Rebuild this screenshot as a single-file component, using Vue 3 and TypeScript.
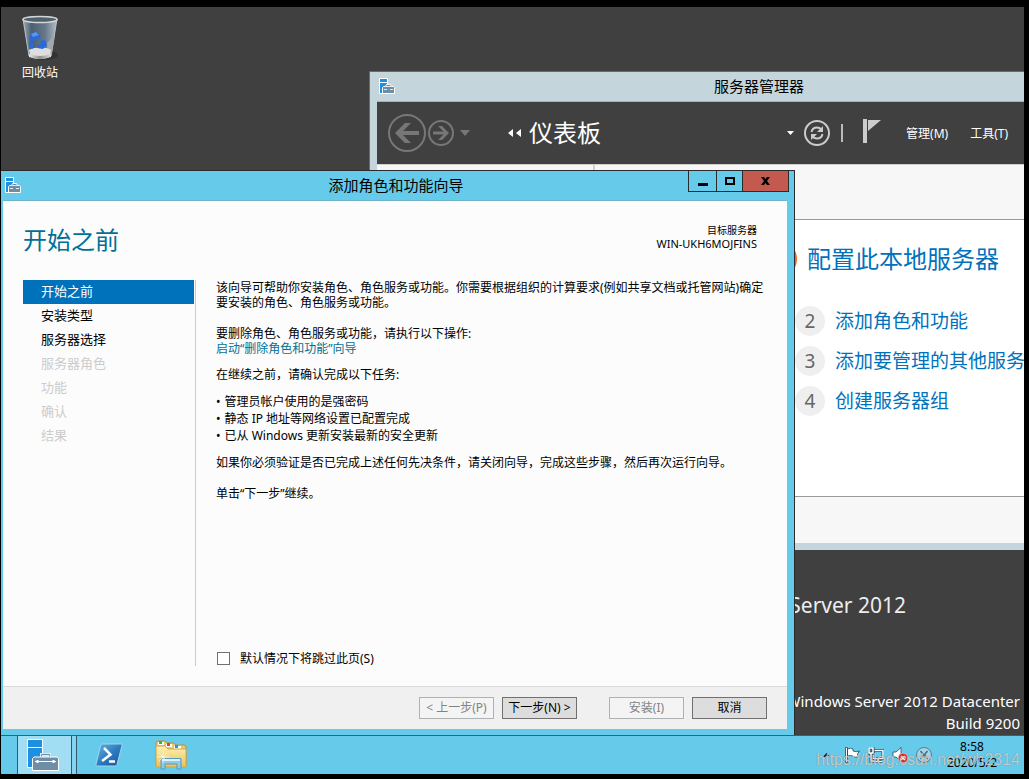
<script setup lang="ts">
import { ref } from 'vue'

interface NavStep {
  label: string
  state: 'active' | 'ready' | 'disabled'
}

const navSteps: NavStep[] = [
  { label: '开始之前', state: 'active' },
  { label: '安装类型', state: 'ready' },
  { label: '服务器选择', state: 'ready' },
  { label: '服务器角色', state: 'disabled' },
  { label: '功能', state: 'disabled' },
  { label: '确认', state: 'disabled' },
  { label: '结果', state: 'disabled' },
]

const tasks: string[] = [
  '管理员帐户使用的是强密码',
  '静态 IP 地址等网络设置已配置完成',
  '已从 Windows 更新安装最新的安全更新',
]

const quickStart = [
  { n: 2, label: '添加角色和功能' },
  { n: 3, label: '添加要管理的其他服务器' },
  { n: 4, label: '创建服务器组' },
]

const menus: string[] = ['管理(M)', '工具(T)']
const skipPage = ref(false)
</script>

<template>
  <div class="screen">
    <svg class="defs" aria-hidden="true">
      <symbol id="server-small" viewBox="0 0 16 16">
        <path d="M.5.5h8v15h-8z" fill="#1f8fe0" stroke="#fff" />
        <path d="M1 4.500h7" stroke="#fff" />
        <path d="M3.500 15.500v-6l1-1h2l1-2h4l1 2h2l1 1v6z" fill="#6f8ea6" stroke="#fff" />
        <path d="M7 8.500h5" stroke="#fff" opacity=".8" />
        <path d="M5 11.500h3M11 11.500h3" stroke="#fff" opacity=".8" />
      </symbol>
      <symbol id="server-large" viewBox="0 0 32 32">
        <path d="M.5.5h15v28h-15z" fill="#1f8fe0" stroke="#fff" />
        <path d="M1 8.500h14" stroke="#fff" />
        <path d="M14.500 18v-2.500h8V18" fill="none" stroke="#dfe9ef" stroke-width="3" />
        <path d="M14.500 18v-2.500h8V18" fill="none" stroke="#6f8ea6" />
        <path d="M5.500 19.500l1.500-1.500h23l1.500 1.500v12h-26z" fill="#6f8ea6" stroke="#fff" />
        <path d="M8 22.500h21" stroke="#fff" />
        <path d="M10.500 21v3M26.500 21v3" stroke="#fff" stroke-width="2" />
      </symbol>
    </svg>

    <main class="workspace">
      <a class="recycle" href="#">
        <svg width="38" height="46" viewBox="0 0 38 46" aria-hidden="true">
          <defs>
            <linearGradient id="bin" x1="0" x2="1">
              <stop offset="0" stop-color="#9eabb5" />
              <stop offset=".25" stop-color="#4c6070" />
              <stop offset=".65" stop-color="#66788a" />
              <stop offset="1" stop-color="#b4bcc2" />
            </linearGradient>
            <linearGradient id="base" x1="0" x2="1">
              <stop offset="0" stop-color="#e8e8e8" />
              <stop offset=".5" stop-color="#8f8f8f" />
              <stop offset="1" stop-color="#d8d8d8" />
            </linearGradient>
          </defs>
          <ellipse cx="23" cy="40" rx="14" ry="5" fill="#2c2c2c" opacity=".6" />
          <path d="M2 4l6 37q11 5 22 0l6-37z" fill="url(#bin)" stroke="#b9c3ca" />
          <path d="M26 28l8-8-3 18-4 3z" fill="#a2a8ad" />
          <path d="M8 35q5-3 11-2 7-1 11 2l-1 5q-10 4-20 0z" fill="#dedede" />
          <path d="M8 39q11 4 22 0v3q-11 4-22 0z" fill="url(#base)" />
          <path d="M9 20l5-3 4 2 2 5-4-1-3 3-5-1zM19 26l5-1 2 5-4 4-6-1 1-3 3-1zM8 26l5 2-1 6-4-2z" fill="#2869e0" />
          <path d="M10 19l5-2 3 3-6 2z" fill="#5b94f4" />
          <ellipse cx="19" cy="4.500" rx="17" ry="3" fill="#4d6170" stroke="#d6d6d6" stroke-width="1.500" />
        </svg>
        <span>回收站</span>
      </a>

      <div class="wordmark">Windows Server 2012</div>
      <div class="build">
        <div>Windows Server 2012 Datacenter</div>
        <div>Build 9200</div>
      </div>

      <section class="manager" aria-label="服务器管理器">
        <header class="manager-title">
          <svg width="16" height="16" aria-hidden="true"><use href="#server-small" /></svg>
          <h2>服务器管理器</h2>
        </header>
        <div class="manager-bar">
          <button class="flat back" aria-label="后退">
            <svg width="38" height="38" viewBox="0 0 38 38" fill="none" stroke="#777">
              <circle cx="19" cy="19" r="18" stroke-width="2" />
              <path d="M31 19H10" stroke-width="4" />
              <path d="M7 19l10-10h6L13 19l10 10h-6z" fill="#777" stroke="none" />
            </svg>
          </button>
          <button class="flat forward" aria-label="前进">
            <svg width="26" height="26" viewBox="0 0 26 26" fill="none" stroke="#777">
              <circle cx="13" cy="13" r="12" stroke-width="2" />
              <path d="M5 13h14" stroke-width="3" />
              <path d="M21 13l-7-7h-4l7 7-7 7h4z" fill="#777" stroke="none" />
            </svg>
          </button>
          <button class="flat history" aria-label="历史记录">
            <svg width="10" height="6" viewBox="0 0 10 6"><path d="M0 0h10L5 6z" fill="#777" /></svg>
          </button>
          <svg class="crumb" width="13" height="8" viewBox="0 0 13 8" aria-hidden="true">
            <path d="M5 0v8L0 4zM13 0v8L8 4z" fill="#fff" />
          </svg>
          <h1>仪表板</h1>
          <button class="flat drop" aria-label="展开">
            <svg width="7" height="4" viewBox="0 0 7 4"><path d="M0 0h7L3.500 4z" fill="#fff" /></svg>
          </button>
          <button class="flat refresh" aria-label="刷新">
            <svg width="26" height="26" viewBox="0 0 26 26" fill="none" stroke="#ccc">
              <circle cx="13" cy="13" r="12" stroke-width="2" />
              <path d="M7.500 12q1-4.500 5.500-4.500 2.500 0 4.500 2" stroke-width="2" />
              <path d="M18.500 14q-1 4.500-5.500 4.500-2.500 0-4.500-2" stroke-width="2" />
              <path d="M19 6v6h-6zM7 20v-6h6z" fill="#ccc" stroke="none" />
            </svg>
          </button>
          <span class="divider"></span>
          <button class="flat flag" aria-label="通知">
            <svg width="18" height="24" viewBox="0 0 18 24" fill="#ccc">
              <path d="M0 0h4v24H0zM5 1h13L5 12z" />
            </svg>
          </button>
          <nav class="menus">
            <button v-for="m in menus" :key="m" class="flat">{{ m }}</button>
          </nav>
        </div>
        <div class="manager-body">
          <div class="side"></div>
          <div class="dashboard">
            <div class="welcome">
              <a class="primary" href="#"><span class="one">1</span>配置此本地服务器</a>
              <ol>
                <li v-for="q in quickStart" :key="q.n">
                  <span class="num">{{ q.n }}</span><a href="#">{{ q.label }}</a>
                </li>
              </ol>
            </div>
          </div>
        </div>
      </section>

      <section class="wizard" aria-label="添加角色和功能向导">
        <header class="wizard-title">
          <svg width="16" height="16" aria-hidden="true"><use href="#server-small" /></svg>
          <h2>添加角色和功能向导</h2>
          <div class="controls">
            <button class="minimize" aria-label="最小化">
              <svg width="10" height="10" viewBox="0 0 10 10"><path d="M0 7h10v3H0z" /></svg>
            </button>
            <button aria-label="最大化">
              <svg width="10" height="8" viewBox="0 0 10 8"><path d="M0 0h10v8H0zM2 2v4h6V2z" fill-rule="evenodd" /></svg>
            </button>
            <button class="close" aria-label="关闭">
              <svg width="9" height="8" viewBox="0 0 9 8"><path d="M0 0h3l1.500 2L6 0h3L6 4l3 4H6L4.500 6 3 8H0l3-4z" /></svg>
            </button>
          </div>
        </header>

        <div class="wizard-body">
          <div class="wizard-head">
            <h1>开始之前</h1>
            <div class="target">
              <div class="target-label">目标服务器</div>
              <div>WIN-UKH6MOJFINS</div>
            </div>
          </div>
          <div class="columns">
            <nav class="steps">
              <button
                v-for="s in navSteps"
                :key="s.label"
                :class="['step', s.state]"
                :disabled="s.state === 'disabled'"
              >{{ s.label }}</button>
            </nav>
            <div class="content">
              <p>该向导可帮助你安装角色、角色服务或功能。你需要根据组织的计算要求(例如共享文档或托管网站)确定要安装的角色、角色服务或功能。</p>
              <p class="far">要删除角色、角色服务或功能，请执行以下操作:<br /><a href="#">启动“删除角色和功能”向导</a></p>
              <p>在继续之前，请确认完成以下任务:</p>
              <ul>
                <li v-for="t in tasks" :key="t">{{ t }}</li>
              </ul>
              <p>如果你必须验证是否已完成上述任何先决条件，请关闭向导，完成这些步骤，然后再次运行向导。</p>
              <p class="far">单击“下一步”继续。</p>
              <label class="skip" for="skip-page">
                <input id="skip-page" v-model="skipPage" type="checkbox" />
                默认情况下将跳过此页(S)
              </label>
            </div>
          </div>
        </div>

        <footer class="wizard-foot">
          <button disabled>&lt; 上一步(P)</button>
          <button>下一步(N) &gt;</button>
          <button class="install" disabled>安装(I)</button>
          <button>取消</button>
        </footer>
      </section>
    </main>

    <footer class="taskbar">
      <button class="task running" aria-label="服务器管理器">
        <svg width="32" height="32" aria-hidden="true"><use href="#server-large" /></svg>
      </button>
      <span class="stack"></span>
      <button class="task shell" aria-label="PowerShell">
        <svg width="28" height="24" viewBox="0 0 28 24">
          <defs>
            <linearGradient id="ps" x1="0" y1="0" x2="1" y2="1">
              <stop offset="0" stop-color="#6fb4e0" />
              <stop offset=".5" stop-color="#2c7cc0" />
              <stop offset="1" stop-color="#1c4f98" />
            </linearGradient>
          </defs>
          <path d="M7 1h19q1.500 0 1 1.500l-5 19q-.5 1.500-2 1.500H2q-1.500 0-1-1.500l4.500-19Q6 1 7 1z" fill="url(#ps)" stroke="#9fd4f2" />
          <path d="M9 5l6.500 6.500L7 18" fill="none" stroke="#fff" stroke-width="2.500" />
          <path d="M14 18.500h6" stroke="#fff" stroke-width="2.500" />
        </svg>
      </button>
      <button class="task explorer" aria-label="文件资源管理器">
        <svg width="32" height="30" viewBox="0 0 32 30">
          <defs>
            <linearGradient id="folder" x1="0" y1="0" x2="0" y2="1">
              <stop offset="0" stop-color="#fff1b0" />
              <stop offset="1" stop-color="#e8c25c" />
            </linearGradient>
          </defs>
          <path d="M1 3q0-2 2-2h7l2 2h7l2 2h8q2 0 2 2v19H1z" fill="#e9c968" stroke="#b8923a" />
          <path d="M3 2h6v3H3zM11 4h6v3h-6zM19 6h7v3h-7z" fill="#fff" />
          <path d="M4 1h3v3H4z" fill="#1ec13a" />
          <path d="M12 3h3v3h-3z" fill="#d6472b" />
          <path d="M20 5h3v3h-3z" fill="#2c8fe8" />
          <path d="M1 6h9l3 3h18v18H1z" fill="url(#folder)" stroke="#d0a94e" />
          <path d="M6 29V18.500h20V29h-4v-5H10v5z" fill="#8ccbec" stroke="#4f98c4" opacity=".95" />
          <path d="M7 20h18" stroke="#d8f2ff" stroke-width="2" />
          <path d="M8 11v12M2 17h12M4 13l8 8M12 13l-8 8" stroke="#fff" stroke-width=".8" opacity=".8" />
        </svg>
      </button>
      <div class="tray">
        <button class="flat" aria-label="显示隐藏的图标">
          <svg width="7" height="4" viewBox="0 0 7 4"><path d="M3.500 0L7 4H0z" fill="#111" /></svg>
        </button>
        <button class="flat" aria-label="操作中心">
          <svg width="16" height="16" viewBox="0 0 16 16">
            <path d="M1.500.5h2v15h-2zM3.500 2q3-1.500 5.500 0v2q3 1.500 6.500 0l-2 3 1 3q-3 1-6-1-2-1-5 0z" fill="#fff" stroke="#234a5c" stroke-width=".8" />
          </svg>
        </button>
        <button class="flat" aria-label="网络">
          <svg width="16" height="16" viewBox="0 0 16 16" fill="none">
            <path d="M5 3.500h10v8H5zM10 11v3M6 14.500h8" stroke="#234a5c" stroke-width="3" />
            <path d="M5 3.500h10v8H5zM10 11v3M6 14.500h8" stroke="#fff" stroke-width="1.500" />
            <path d="M1 1h4v5H1zM3 6v8h3" stroke="#234a5c" stroke-width="3" />
            <path d="M1 1h4v5H1zM3 6v8h3" stroke="#fff" stroke-width="1.500" />
          </svg>
        </button>
        <button class="flat" aria-label="音量">
          <svg width="16" height="16" viewBox="0 0 16 16">
            <path d="M1 5h3l5-4.500v14L4 10H1z" fill="#fff" stroke="#234a5c" stroke-width=".8" />
            <circle cx="11" cy="11" r="4.800" fill="#df2a22" stroke="#f7d4d2" stroke-width=".6" />
            <path d="M9 9l4 4M13 9l-4 4" stroke="#fff" stroke-width="1.500" />
          </svg>
        </button>
        <button class="flat" aria-label="输入法">
          <svg width="16" height="16" viewBox="0 0 16 16" fill="none">
            <circle cx="8" cy="8" r="7.500" fill="#a9d3e6" stroke="#4b8098" />
            <path d="M4.500 4l2.500 3v2l-2.500 3M11.500 4L9 7v2l2.500 3M6.500 8h3" stroke="#3c6f86" stroke-width="1.500" />
          </svg>
        </button>
        <time class="clock" datetime="2020-05-02T08:58">
          <span>8:58</span>
          <span>2020/5/2</span>
        </time>
      </div>
    </footer>
    <div class="watermark">https://blog.csdn.net/wh2314</div>
  </div>
</template>

<style>
html,
body {
  margin: 0;
  background: #000;
}
</style>

<style scoped>
.screen {
  position: relative;
  box-sizing: border-box;
  display: flex;
  flex-direction: column;
  min-height: 100vh;
  padding: 7px 5px 5px 1px;
  background: #000;
  color: #000;
  font: 12px/15px "Noto Sans", "Noto Sans CJK SC", sans-serif;
}
.screen *,
.screen *::before {
  box-sizing: border-box;
}
.defs {
  position: absolute;
  width: 0;
  height: 0;
}
h1,
h2,
p,
ul,
ol {
  margin: 0;
  padding: 0;
  font-weight: 400;
  list-style: none;
}
svg {
  display: block;
  flex: none;
}
a {
  text-decoration: none;
}
button {
  padding: 0;
  font: inherit;
  color: inherit;
}
.flat {
  display: block;
  flex: none;
  border: 0;
  background: none;
}

/* Desktop */
.workspace {
  position: relative;
  flex: 1;
  min-height: 640px;
  overflow: hidden;
  background: #404040;
}
.recycle {
  position: absolute;
  left: 9px;
  top: 8px;
  display: flex;
  flex-direction: column;
  align-items: center;
  gap: 4px;
  width: 60px;
  color: #fff;
}
.wordmark {
  position: absolute;
  right: 118px;
  bottom: 115px;
  color: #eee;
  font-size: 21px;
  line-height: 30px;
  white-space: nowrap;
}
.build {
  position: absolute;
  right: 4px;
  bottom: 1px;
  color: #fff;
  font-size: 15px;
  line-height: 22px;
  text-align: right;
  white-space: nowrap;
}

/* Server manager window */
.manager {
  position: absolute;
  left: 368px;
  right: -122px;
  top: 64px;
  bottom: 185px;
  display: flex;
  flex-direction: column;
  padding: 0 6px 7px 7px;
  border: 1px solid #686c6f;
  border-bottom: 0;
  background: #c4d6dc;
}
.manager-title,
.wizard-title {
  display: grid;
  grid-template-columns: 1fr auto 1fr;
  align-items: center;
  flex: none;
  height: 30px;
  padding: 0 0 2px 2px;
}
.manager-title h2,
.wizard-title h2 {
  font-size: 15px;
  line-height: 20px;
}
.manager-title {
  border-bottom: 1px solid #a5b1b6;
}
.manager-bar {
  display: flex;
  align-items: center;
  flex: none;
  height: 62px;
  padding-left: 11px;
  background: #404040;
  color: #fff;
}
.forward {
  margin-left: 2px;
}
.history {
  margin-left: 6px;
}
.crumb {
  margin-left: 38px;
}
.manager-bar h1 {
  margin-left: 8px;
  font-size: 24px;
  line-height: 32px;
}
.drop {
  margin-left: auto;
}
.refresh {
  margin-left: 10px;
}
.divider {
  width: 2px;
  height: 18px;
  margin-left: 11px;
  background: #bbb;
}
.flag {
  margin: 0 25px 4px 20px;
}
.menus {
  display: flex;
  gap: 22px;
  padding-right: 131px;
}
.manager-body {
  display: flex;
  flex: 1;
  border-top: 1px solid #d0d0d0;
  background: #f7f7f7;
}
.side {
  width: 218px;
  border-right: 2px solid #d0d0d0;
}
.dashboard {
  flex: 1;
  padding: 54px 0 46px;
}
.welcome {
  height: 100%;
  padding: 21px 0 0 166px;
  border: solid #999;
  border-width: 1px 0;
  background: #fff;
}
.primary {
  display: flex;
  align-items: center;
  gap: 10px;
  color: #0072bc;
  font-size: 24px;
  line-height: 36px;
  white-space: nowrap;
}
.one {
  width: 36px;
  height: 36px;
  border-radius: 50%;
  background: #f26522;
  color: #fff;
  text-align: center;
}
.welcome ol {
  display: grid;
  gap: 10px;
  margin: 29px 0 0 34px;
}
.welcome li {
  display: flex;
  gap: 10px;
  font-size: 19px;
  line-height: 30px;
  white-space: nowrap;
}
.welcome li a {
  color: #0072bc;
}
.num {
  width: 30px;
  height: 30px;
  border-radius: 50%;
  background: #efefef;
  color: #666;
  text-align: center;
}

/* Wizard window */
.wizard {
  position: absolute;
  left: 0;
  right: 229px;
  top: 163px;
  bottom: 0;
  display: flex;
  flex-direction: column;
  padding: 0 7px 6px 2px;
  border: solid #2b2b2b;
  border-width: 1px 1px 0 0;
  background: #66caea;
}
.wizard-title {
  border-bottom: 1px solid #6fb2ca;
}
.controls {
  display: flex;
  align-self: start;
  justify-self: end;
  margin-right: -2px;
  border: 1px solid #2b2b2b;
  border-top: 0;
}
.controls button {
  display: grid;
  place-items: center;
  width: 26px;
  height: 20px;
  border: 0;
  border-right: 1px solid #2b2b2b;
  background: #66caea;
}
.controls .minimize {
  width: 28px;
}
.controls .close {
  width: 45px;
  border-right: 0;
  background: #c4594f;
}
.wizard-body {
  display: flex;
  flex: 1;
  flex-direction: column;
  padding: 23px 20px 20px;
  background: #fcfcfc;
}
.wizard-head {
  display: flex;
  justify-content: space-between;
  height: 56px;
  padding-right: 10px;
}
.wizard-head h1 {
  color: #007096;
  font-size: 24px;
  line-height: 32px;
}
.target {
  font-size: 11px;
  line-height: 13px;
  text-align: right;
}
.target-label {
  font-size: 10px;
}
.columns {
  display: flex;
  flex: 1;
}
.steps {
  flex: none;
  width: 173px;
  padding-right: 1px;
  border-right: 1px solid #ccc;
}
.step {
  display: block;
  width: 100%;
  height: 24px;
  padding: 0 0 2px 18px;
  border: 0;
  background: none;
  font-size: 13px;
  line-height: 22px;
  text-align: left;
}
.step.active {
  background: #0072bc;
  color: #fff;
}
.step.disabled {
  color: #ccc;
}
.content {
  display: flex;
  flex: 1;
  flex-direction: column;
  gap: 11px;
  padding-left: 20px;
}
.content .far {
  margin-top: 5px;
}
.content a {
  color: #007096;
}
.content li {
  display: flex;
  gap: 4px;
  line-height: 17px;
}
.content li::before {
  content: "•";
}
.skip {
  display: flex;
  align-items: center;
  gap: 10px;
  margin-top: auto;
}
.skip input {
  appearance: none;
  width: 13px;
  height: 13px;
  margin: 0 0 0 1px;
  border: 1px solid #707070;
  background: #fff;
}
.skip input:checked {
  background: #707070;
}
.wizard-foot {
  display: flex;
  flex: none;
  justify-content: flex-end;
  gap: 8px;
  padding: 10px 20px;
  border-top: 1px solid #dcdcdc;
  background: #f0f0f0;
}
.wizard-foot button {
  width: 75px;
  height: 22px;
  border: 1px solid #707070;
  background: #ddd;
  line-height: 20px;
  white-space: nowrap;
}
.wizard-foot button:disabled {
  border-color: #adb2b5;
  background: #f4f4f4;
  color: #838383;
}
.wizard-foot .install {
  margin-left: 24px;
}

/* Taskbar */
.taskbar {
  display: flex;
  align-items: center;
  flex: none;
  height: 39px;
  padding-left: 16px;
  border-top: 1px solid #4d5a60;
  background: #66caea;
}
.task {
  display: grid;
  place-items: center;
  border: 0;
  background: none;
}
.running {
  width: 55px;
  height: 100%;
  padding-right: 3px;
  border: solid #2d5b6b;
  border-width: 0 1px;
  background: #a2def3;
}
.stack {
  width: 5px;
  height: 100%;
  border-right: 1px solid #2d5b6b;
  background: #84d4ef;
}
.shell {
  margin-left: 18px;
}
.explorer {
  margin-left: 32px;
}
.tray {
  display: flex;
  align-items: center;
  gap: 8px;
  margin-left: auto;
}
.tray .flat:first-child {
  margin-right: 6px;
}
.clock {
  display: flex;
  flex-direction: column;
  width: 64px;
  margin-right: 20px;
  line-height: 16px;
  text-align: center;
}
.watermark {
  position: absolute;
  right: 9px;
  bottom: 10px;
  color: rgba(255, 255, 255, 0.6);
  font: 16px/18px "Liberation Sans", sans-serif;
  text-shadow: 0 0 1px rgba(90, 90, 90, 0.8);
  pointer-events: none;
}
</style>
